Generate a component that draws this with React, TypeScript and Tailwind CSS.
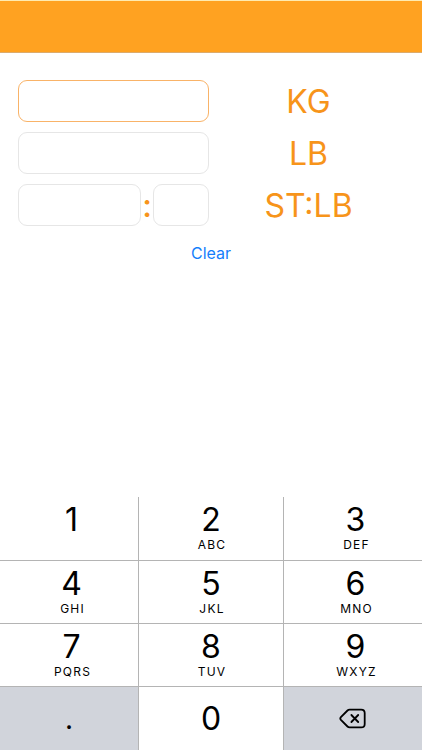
import { useState } from "react";

type Field = "kg" | "lb" | "st" | "stLb";

const ROWS = [
  [["1", ""], ["2", "ABC"], ["3", "DEF"]],
  [["4", "GHI"], ["5", "JKL"], ["6", "MNO"]],
  [["7", "PQRS"], ["8", "TUV"], ["9", "WXYZ"]],
];

const EMPTY: Record<Field, string> = { kg: "", lb: "", st: "", stLb: "" };

const COLUMNS = "grid grid-cols-[138fr_146fr_138fr]";
const LABEL = "flex h-[42px] items-center justify-center pt-0.5 text-[32px] leading-10 text-[#f7941a]";

function DeleteIcon() {
  return (
    <svg
      width="28"
      height="22"
      viewBox="0 0 28 22"
      fill="none"
      stroke="currentColor"
      strokeWidth="1.8"
      strokeLinecap="round"
      strokeLinejoin="round"
      aria-hidden="true"
    >
      <path d="M10.6 1.6H22.2Q25.7 1.6 25.7 5.1V15.9Q25.7 19.4 22.2 19.4H10.6Q9.4 19.4 8.5 18.5L1.9 11.8Q0.7 10.5 1.9 9.2L8.5 2.5Q9.4 1.6 10.6 1.6Z" />
      <path d="M12.4 7L19.2 14M19.2 7L12.4 14" />
    </svg>
  );
}

export default function App() {
  const [values, setValues] = useState(EMPTY);
  const [active, setActive] = useState<Field>("kg");

  const press = (key: string) => setValues((v) => ({ ...v, [active]: v[active] + key }));
  const erase = () => setValues((v) => ({ ...v, [active]: v[active].slice(0, -1) }));

  const field = (name: Field) => ({
    id: name,
    value: values[name],
    inputMode: "none" as const,
    onFocus: () => setActive(name),
    onChange: (e: React.ChangeEvent<HTMLInputElement>) =>
      setValues((v) => ({ ...v, [name]: e.target.value })),
    className: `h-[42px] w-full min-w-0 rounded-[9px] border bg-white px-2 text-2xl outline-none ${
      active === name ? "border-[#f9b368]" : "border-[#e6e6e6]"
    }`,
  });

  return (
    <div className="flex min-h-screen flex-col bg-white font-['Inter',sans-serif] text-black">
      <header className="h-[53px] border-y border-t-[#ffebb0] border-b-[#dcab6c] bg-[#ffa221]" />

      <main className="px-[18px] pt-[27px]">
        <div className="grid grid-cols-2 gap-x-1 gap-y-2.5">
          <input {...field("kg")} />
          <label htmlFor="kg" className={LABEL}>KG</label>
          <input {...field("lb")} />
          <label htmlFor="lb" className={LABEL}>LB</label>
          <div className="flex items-center">
            <div className="flex-1">
              <input {...field("st")} aria-label="Stone" />
            </div>
            <span className="w-3 pt-0.5 text-center text-[32px] leading-10 font-medium text-[#f7941a]">:</span>
            <div className="w-14">
              <input {...field("stLb")} aria-label="Pounds" />
            </div>
          </div>
          <label htmlFor="st" className={LABEL}>ST:LB</label>
        </div>
        <div className="mt-[15px] flex justify-center">
          <button type="button" onClick={() => setValues(EMPTY)} className="text-base leading-6 text-[#157efb]">
            Clear
          </button>
        </div>
      </main>

      <section aria-label="Keypad" className="mt-auto">
        {ROWS.map((row, r) => (
          <div key={r} className={`${COLUMNS} ${r === 0 ? "h-16" : "h-[63px]"} border-b border-[#b4b4b4]`}>
            {row.map(([digit, letters], c) => (
              <button
                key={digit}
                type="button"
                onClick={() => press(digit)}
                className={`flex flex-col items-center pt-[7px] ${c === 1 ? "border-x border-[#b4b4b4]" : "pl-[5px]"}`}
              >
                <span className="text-[32px] leading-8">{digit}</span>
                {letters && <span className="pl-0.5 text-xs leading-[18px] tracking-widest">{letters}</span>}
              </button>
            ))}
          </div>
        ))}
        <div className={`${COLUMNS} h-[63px]`}>
          <button type="button" onClick={() => press(".")} className="bg-[#d1d4db] text-[28px] leading-8">
            .
          </button>
          <button type="button" onClick={() => press("0")} className="border-x border-[#b4b4b4] text-[32px] leading-8">
            0
          </button>
          <button type="button" aria-label="Delete" onClick={erase} className="flex items-center justify-center bg-[#d1d4db]">
            <DeleteIcon />
          </button>
        </div>
      </section>
    </div>
  );
}
